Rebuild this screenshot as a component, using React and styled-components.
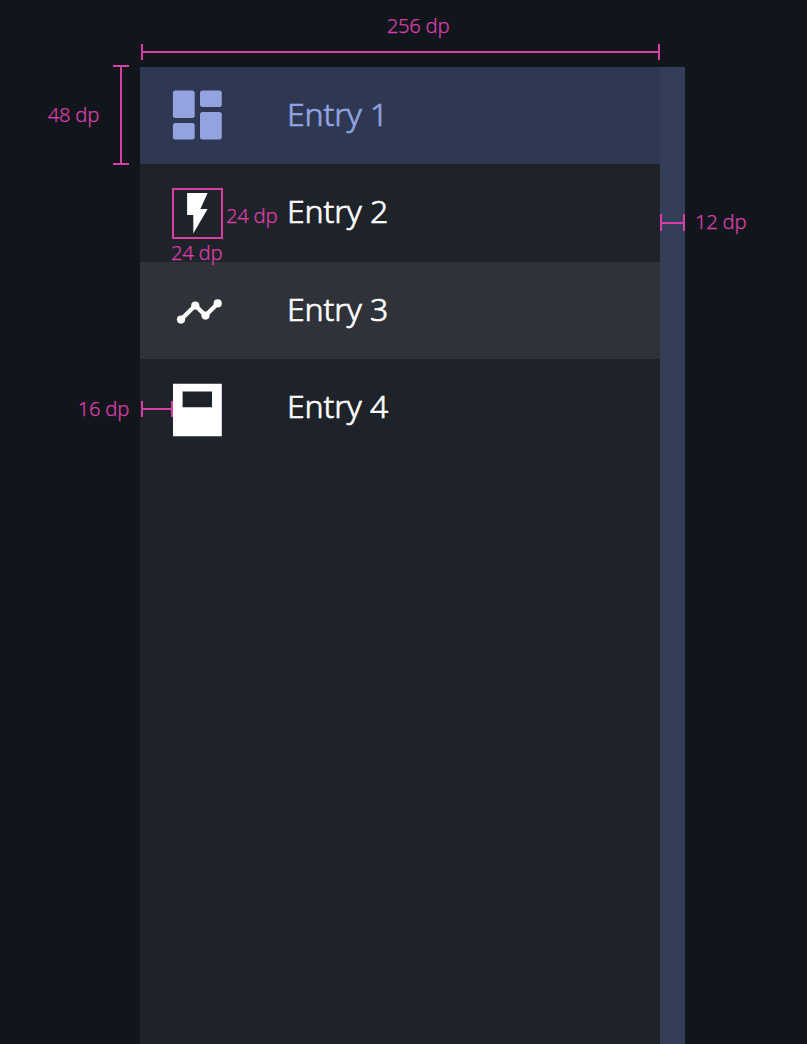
import React from "react";
import styled, { createGlobalStyle } from "styled-components";

const pink = "#d63fa6";

const GlobalStyle = createGlobalStyle`
  * { box-sizing: border-box; }
  html, body { margin: 0; background: #11161d; overflow: hidden; }
`;

const Page = styled.main`
  width: 807px;
  height: 1044px;
  display: grid;
  grid-template-columns: 140px 520px 25px 1fr;
  grid-template-rows: 67px 1fr;
  overflow: hidden;
  background: #11161d;
  font-family: "Noto Sans", "Open Sans", sans-serif;
`;

const Header = styled.header`
  grid-column: 2;
  display: flex;
  flex-direction: column;
  align-items: center;
  padding: 12px 0 7px 1px;
  gap: 4px;

  & > span { margin-left: 35px; }
`;

const LeftGutter = styled.aside`
  grid-column: 1;
  display: flex;
  flex-direction: column;
  align-items: flex-end;
  gap: 230px;
  margin-top: -2px;
  padding-right: 11px;
`;

const RightGutter = styled.aside`
  padding: 141px 0 0 10px;
`;

const HeightMark = styled.div`
  display: flex;
  align-items: center;
  gap: 14px;
  height: 100px;
`;

const Drawer = styled.nav`
  background: #1e2229;
  display: flex;
  flex-direction: column;
`;

const Edge = styled.div`
  background: #343e58;
  padding-top: 147px;
`;

const tones = {
  active: { bg: "#2e3852", fg: "#93a3e0" },
  hover: { bg: "#30323a", fg: "#ffffff" },
  plain: { bg: "transparent", fg: "#ffffff" },
};

const Entry = styled.div`
  height: 97.4px;
  flex: none;
  display: grid;
  grid-template-columns: 32px 50px 65px 1fr;
  align-items: center;
  background: ${(p) => tones[p.$tone].bg};
  color: ${(p) => tones[p.$tone].fg};
`;

const Inset = styled.div`
  padding: 2px 0 0 1px;
`;

const IconSlot = styled.div`
  position: relative;
  height: 50px;

  svg { display: block; overflow: visible; }
`;

const Gap = styled.div`
  padding: 6px 0 0 4px;
`;

const Label = styled.span`
  font-size: 32px;
  font-weight: 300;
  -webkit-text-stroke: 0.7px currentColor;
  line-height: 44px;
  letter-spacing: -0.1px;
  white-space: nowrap;
  padding-bottom: 3.4px;
`;

const Dimension = styled.div`
  flex: none;
  display: flex;
  align-items: center;
  justify-content: center;
  flex-direction: ${(p) => (p.$vertical ? "column" : "row")};
  width: ${(p) => p.$w}px;
  height: ${(p) => p.$h}px;
  border: 0 solid ${pink};
  border-width: ${(p) => (p.$vertical ? "2px 0" : "0 2px")};

  &::after {
    content: "";
    flex: 1;
    background: ${pink};
    ${(p) => (p.$vertical ? "width: 2px;" : "height: 2px;")}
  }
`;

const Bounds = styled.div`
  position: absolute;
  inset: 0 -1px -1px 0;
  border: 2px solid ${pink};
`;

const Measure = styled.span`
  display: block;
  color: ${pink};
  font-size: 20.3px;
  font-weight: 300;
  -webkit-text-stroke: 0.25px currentColor;
  letter-spacing: -0.3px;
  line-height: 26px;
  padding-bottom: 2px;
  white-space: nowrap;
`;

const Caption = styled(Measure)`
  position: absolute;
  top: calc(100% + 1px);
  left: -1px;
  z-index: 1;
`;

const DashboardIcon = () => (
  <svg width="50" height="50" viewBox="0 0 50 50" fill="currentColor">
    <rect x="0.9" y="-0.5" width="21.8" height="27.4" rx="2.5" />
    <rect x="28" y="-0.5" width="21.8" height="16.4" rx="2.5" />
    <rect x="0.9" y="32" width="21.8" height="16.4" rx="2.5" />
    <rect x="28" y="21" width="21.8" height="27.4" rx="2.5" />
  </svg>
);

const BoltIcon = () => (
  <svg width="50" height="50" viewBox="0 0 50 50" fill="currentColor">
    <path d="M15.1 4.9H35.6L28.4 21.1H35.6L21.3 45.5V27.1H15.1Z" />
  </svg>
);

const TrendIcon = () => (
  <svg width="50" height="50" viewBox="0 0 50 50" fill="currentColor">
    <path d="M9 34.6L23.3 20.5L33.5 30.6L45.7 18.4" fill="none" stroke="currentColor" strokeWidth="4.2" />
    <circle cx="9" cy="34.6" r="4.1" />
    <circle cx="23.3" cy="20.5" r="4.1" />
    <circle cx="33.5" cy="30.6" r="4.1" />
    <circle cx="45.7" cy="18.4" r="4.1" />
  </svg>
);

const DeviceIcon = () => (
  <svg width="50" height="50" viewBox="0 0 50 50" fill="currentColor">
    <path fillRule="evenodd" d="M1 .7H49.8V53.3H1ZM10.6 8.4V24.2H40V8.4Z" />
  </svg>
);

const entries = [
  { label: "Entry 1", tone: "active", Icon: DashboardIcon },
  { label: "Entry 2", tone: "plain", Icon: BoltIcon, bounds: "24 dp" },
  { label: "Entry 3", tone: "hover", Icon: TrendIcon },
  { label: "Entry 4", tone: "plain", Icon: DeviceIcon, inset: true },
];

export default function App() {
  return (
    <>
      <GlobalStyle />
      <Page>
        <Header>
          <Measure>256 dp</Measure>
          <Dimension $w={519} $h={16} />
        </Header>
        <LeftGutter>
          <HeightMark>
            <Measure>48 dp</Measure>
            <Dimension $vertical $w={16} $h={100} />
          </HeightMark>
          <Measure>16 dp</Measure>
        </LeftGutter>
        <Drawer>
          {entries.map(({ label, tone, Icon, bounds, inset }) => (
            <Entry key={label} $tone={tone}>
              <Inset>{inset && <Dimension $w={32} $h={16} />}</Inset>
              <IconSlot>
                <Icon />
                {bounds && <Bounds />}
                {bounds && <Caption>{bounds}</Caption>}
              </IconSlot>
              <Gap>{bounds && <Measure>{bounds}</Measure>}</Gap>
              <Label>{label}</Label>
            </Entry>
          ))}
        </Drawer>
        <Edge>
          <Dimension $w={25} $h={17} />
        </Edge>
        <RightGutter>
          <Measure>12 dp</Measure>
        </RightGutter>
      </Page>
    </>
  );
}
